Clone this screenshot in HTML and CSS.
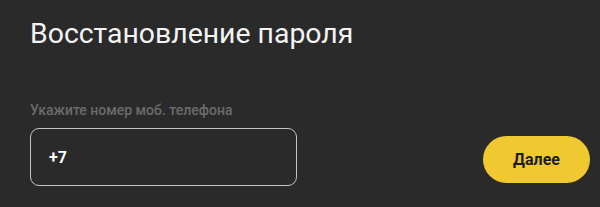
FILE: index.html
```html
<!DOCTYPE html>
<html>

<head>
    <title>Восстановление пароля</title>
    <link rel="stylesheet" href="styles.css">
</head>

<body>
    <div class="recovery">
        <h1 class="recovery_title">Восстановление пароля</h1>

        <div class="recovery_form">
            <div class="field">
                <label class="field_label" for="phone">Укажите номер моб. телефона</label>
                <div class="field_box">
                    <input type="text" id="phone" class="field_input" value="+7">
                </div>
            </div>
            <button class="btn_next">Далее</button>
        </div>
    </div>
</body>

</html>
```

FILE: styles.css
```css
* {
    margin: 0;
    padding: 0;
    box-sizing: border-box;
}

body {
    background: #2a2a2a;
    font-family: Roboto, "Noto Sans", sans-serif;
    width: 600px;
    height: 207px;
    overflow: hidden;
}

.recovery {
    padding: 17px 10px 0 30px;
}

.recovery_title {
    font-size: 28.4px;
    font-weight: 400;
    color: #f4f4f4;
    line-height: 34px;
}

.recovery_form {
    display: flex;
    align-items: flex-end;
    justify-content: space-between;
    margin-top: 51px;
}

.field_label {
    display: block;
    font-size: 14px;
    font-weight: 500;
    color: #6b6b6b;
    line-height: 16px;
    margin-bottom: 10px;
}

.field_box {
    width: 267px;
    height: 58px;
    border: 1.5px solid #c4c4c4;
    border-radius: 9px;
    display: flex;
    align-items: center;
    padding-left: 18px;
}

.field_input {
    background: none;
    border: none;
    outline: none;
    color: #fff;
    font-family: Roboto, "Noto Sans", sans-serif;
    font-size: 16px;
    font-weight: 700;
    width: 100%;
}

.btn_next {
    width: 107px;
    height: 47px;
    margin-bottom: 3px;
    border: none;
    border-radius: 24px;
    background: #f0c930;
    color: #1c1c1c;
    font-family: Roboto, "Noto Sans", sans-serif;
    font-size: 16px;
    font-weight: 700;
}
```
